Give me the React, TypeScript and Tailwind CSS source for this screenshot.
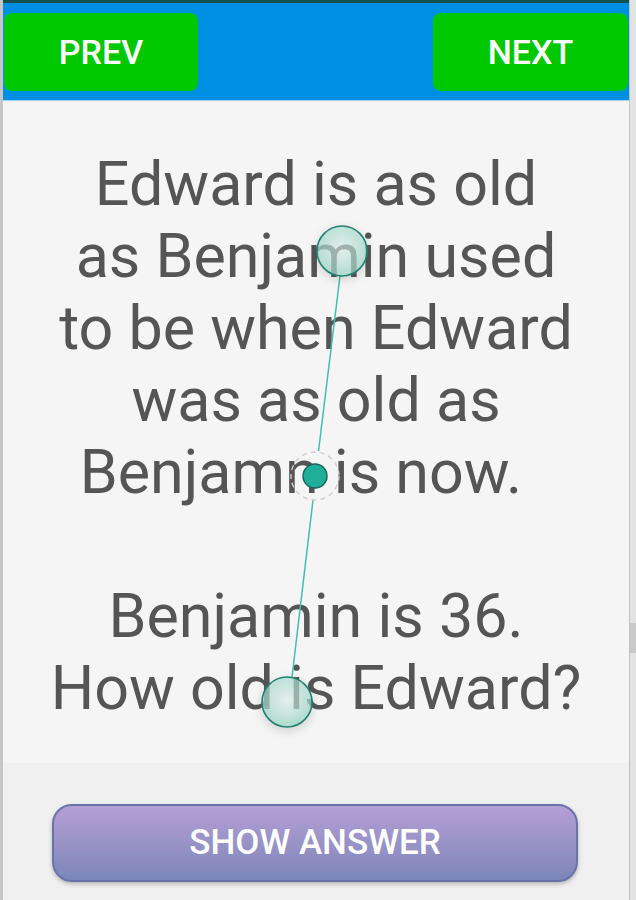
import React from "react";

const lines = [
  "Edward is as old",
  "as Benjamin used",
  "to be when Edward",
  "was as old as",
  "Benjamn is now.  ",
  "\u00a0",
  "Benjamin is 36.",
  "How old is Edward?",
];

function Overlay() {
  return (
    <svg
      className="absolute left-0 top-0 pointer-events-none"
      width="636"
      height="900"
      viewBox="0 0 636 900"
    >
      <defs>
        <radialGradient id="tg" cx="50%" cy="45%" r="55%">
          <stop offset="0%" stopColor="#e2f3ee" stopOpacity="0.55" />
          <stop offset="100%" stopColor="#98d6c5" stopOpacity="0.72" />
        </radialGradient>
        <filter id="sh" x="-50%" y="-50%" width="200%" height="200%">
          <feDropShadow dx="0" dy="3" stdDeviation="5" floodColor="#000" floodOpacity="0.2" />
        </filter>
      </defs>
      <line x1="340" y1="276" x2="318.5" y2="451" stroke="#3fc0ad" strokeWidth="1.5" />
      <line x1="313" y1="500" x2="292" y2="677" stroke="#3fc0ad" strokeWidth="1.5" />
      <circle cx="342" cy="251" r="25" fill="url(#tg)" stroke="#23806f" strokeWidth="1.6" filter="url(#sh)" />
      <circle cx="315" cy="476" r="24" fill="none" stroke="#cfcfcf" strokeWidth="1.4" strokeDasharray="5 4" />
      <circle cx="315" cy="476" r="12" fill="#1fae99" stroke="#17635a" strokeWidth="1.4" />
      <circle cx="287" cy="702" r="25" fill="url(#tg)" stroke="#23806f" strokeWidth="1.6" filter="url(#sh)" />
    </svg>
  );
}

export default function App() {
  return (
    <div
      className="relative w-[636px] h-[900px] flex overflow-hidden bg-[#f0f0f0]"
      style={{ fontFamily: "Roboto, 'Noto Sans', sans-serif" }}
    >
      <div className="w-[3px] h-full bg-[#c6c6c6]" />
      <div className="flex-1 flex flex-col">
        <div className="h-[3px] bg-[#124f4d]" />
        <div className="h-[98px] bg-[#0090e3] flex justify-between items-start pt-[10px] px-[1px] border-b border-[#9fcff0]">
          <div className="w-[194px] h-[78px] rounded-[8px] bg-[#00c800] flex items-center justify-center text-white text-[34px] font-medium">
            PREV
          </div>
          <div className="w-[195px] h-[78px] rounded-[8px] bg-[#00c800] flex items-center justify-center text-white text-[34px] font-medium">
            NEXT
          </div>
        </div>
        <div className="h-[662px] bg-[#f5f5f5] pt-[47px] flex flex-col items-center text-[#555555] text-[61px] leading-[72px]">
          {lines.map((l, i) => (
            <div key={i} className="whitespace-pre">
              {l}
            </div>
          ))}
        </div>
        <div className="flex-1 bg-[#f0f0f0] pt-[41px] pl-[49px]">
          <div className="w-[526px] h-[78px] rounded-[20px] border-2 border-[#6a72aa] bg-gradient-to-b from-[#b59fd7] to-[#7c86b8] shadow-[0_2px_4px_rgba(0,0,0,0.25)] flex items-center justify-center text-white text-[35px] font-medium">
            SHOW ANSWER
          </div>
        </div>
      </div>
      <div className="w-[7px] h-full bg-[#e3e3e3] border-l border-[#c2c2c2] flex flex-col">
        <div className="h-[623px]" />
        <div className="h-[30px] bg-[#c9c9c9]" />
      </div>
      <Overlay />
    </div>
  );
}
